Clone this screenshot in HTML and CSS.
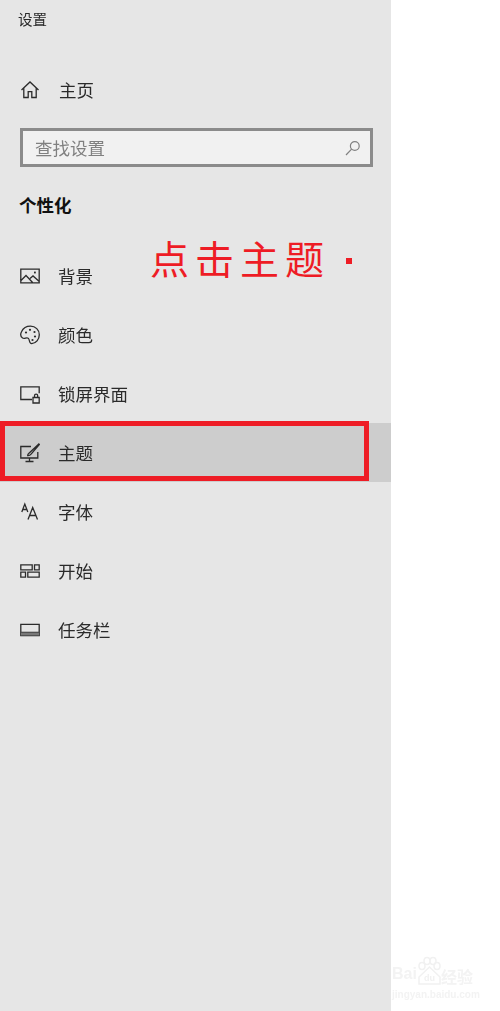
FILE: index.html
```html
<!DOCTYPE html>
<html lang="zh-CN">
<head>
<meta charset="utf-8">
<title>设置</title>
<link rel="stylesheet" href="styles.css">
</head>
<body>
<div class="page">
  <aside class="sidebar">
    <div class="title">设置</div>
    <div class="row home">
      <svg class="icon" viewBox="0 0 20 20"><path d="M1.500 10 10 2l8.500 8M3.800 8.200v9.300h4.400v-5.800h3.600v5.800h4.400V8.200"/></svg>
      <span>主页</span>
    </div>
    <div class="search">
      <span class="placeholder">查找设置</span>
      <svg class="search-icon" viewBox="0 0 16 16"><circle cx="9.800" cy="6" r="4.400"/><path d="M6.600 9.200 1 15"/></svg>
    </div>
    <h2 class="heading">个性化</h2>
    <nav class="nav">
      <div class="row">
        <svg class="icon" viewBox="0 0 20 20"><path d="M.8 3.200h18.400v13.600H.8zM1 14.500l5-5 6.600 7M10 12.500l3-2.600 6 5.400"/><rect class="fill" x="14" y="5.600" width="1.800" height="1.800"/></svg>
        <span>背景</span>
      </div>
      <div class="row">
        <svg class="icon" viewBox="0 0 20 20"><path d="M10.500 1.200c5 0 8.800 3.700 8.800 8.500s-3.400 8.900-7.600 8.900c-3 0-1.600-3.500-3.300-5.200-1.900-1.900-3.600 1-5.800-.4C.5 11.600.4 9 1.500 6.800 3.100 3.300 6.500 1.200 10.500 1.200z"/><circle class="fill" cx="6" cy="7.500" r="1.100"/><circle class="fill" cx="10" cy="4.800" r="1.100"/><circle class="fill" cx="14.500" cy="7" r="1.100"/><circle class="fill" cx="15" cy="11.500" r="1.100"/><circle class="fill" cx="12.500" cy="15" r="1.100"/></svg>
        <span>颜色</span>
      </div>
      <div class="row">
        <svg class="icon" viewBox="0 0 20 20"><path d="M12 15.500H.8V2.800h18.400v6.500M13 13.500h6.200v5.500H13zM14.500 13.500v-1.700c0-2.200 3.200-2.200 3.200 0v1.700"/></svg>
        <span>锁屏界面</span>
      </div>
      <div class="row active">
        <svg class="icon" viewBox="0 0 20 20"><path d="M11 3.500H.8v11.500h17V9M9.500 15v3M5.500 18.500h8"/><path d="M18.800 1 9.500 9.800c-.8.800-1.800 1-1.800 2.800 1.800.2 2.800-.8 3.600-1.800L19.300 1.500z"/></svg>
        <span>主题</span>
      </div>
      <div class="row">
        <svg class="icon" viewBox="0 0 20 20"><path d="M1.800 10 4.800 2l3 8M2.800 7.500h4M8 17.500 12.700 5.500l4.800 12M9.500 13.500h6.400"/></svg>
        <span>字体</span>
      </div>
      <div class="row">
        <svg class="icon" viewBox="0 0 20 20"><path d="M.8 3.800h11.400v5H.8zM14.500 3.800h4.700v5h-4.700zM.8 11.200h4.700v5H.8zM7.800 11.200h11.400v5H7.800z"/></svg>
        <span>开始</span>
      </div>
      <div class="row">
        <svg class="icon" viewBox="0 0 20 20"><path d="M.8 4.300h18.400v11.400H.8zM.8 12.300h18.400"/><rect class="fill soft" x="1" y="12.500" width="18" height="3"/></svg>
        <span>任务栏</span>
      </div>
    </nav>
  </aside>
  <main class="content"></main>
  <div class="highlight"></div>
  <div class="note">点击主题</div>
  <div class="dot"></div>
  <div class="mark">
    <div class="mark-top">
      <span class="mark-bai">Bai</span>
      <svg class="paw" viewBox="0 0 24 28"><ellipse cx="5" cy="9" rx="3" ry="3.500"/><ellipse cx="10" cy="4" rx="3" ry="3.500"/><ellipse cx="16" cy="4" rx="3" ry="3.500"/><ellipse cx="20" cy="9" rx="3" ry="3.500"/><path d="M12.500 10 2 20v7h21v-7z"/><text x="12.500" y="24" text-anchor="middle">du</text></svg>
      <span class="mark-cn">经验</span>
    </div>
    <div class="mark-url">jingyan.baidu.com</div>
  </div>
</div>
</body>
</html>
```
FILE: styles.css
```css
* {
  box-sizing: border-box;
}

html,
body {
  margin: 0;
  padding: 0;
  background: #fff;
}

body {
  font-family: "Noto Sans CJK SC", "Liberation Sans", sans-serif;
  color: #222;
}

.page {
  position: relative;
  display: flex;
  width: 500px;
  height: 1011px;
  overflow: hidden;
}

.sidebar {
  display: flex;
  flex-direction: column;
  width: 391px;
  height: 1011px;
  background: #e6e6e6;
}

.content {
  flex: 1;
  background: #fff;
}

.title {
  height: 40px;
  padding: 9px 0 0 18px;
  font-size: 14.500px;
  line-height: 20px;
  color: #2a2a2a;
  filter: blur(0.3px);
}

.row {
  display: flex;
  align-items: center;
  gap: 18px;
  height: 59px;
  padding-left: 20px;
  font-size: 17.500px;
  color: #2a2a2a;
}

.row span {
  filter: blur(0.35px);
}

.home {
  gap: 19px;
  height: 59px;
  margin-top: 20px;
}

.icon {
  flex: none;
  width: 20px;
  height: 20px;
  fill: none;
  stroke: #2b2b2b;
  stroke-width: 1.300;
  filter: blur(0.3px);
}

.icon .fill {
  fill: #2b2b2b;
  stroke: none;
}

.icon .soft {
  fill: #777;
}

.search {
  display: flex;
  align-items: center;
  justify-content: space-between;
  width: 353px;
  height: 39px;
  margin: 9px 0 0 20px;
  padding: 0 9px 0 12px;
  background: #f1f1f1;
  border: 3px solid #8b8b8b;
}

.placeholder {
  font-size: 17.500px;
  color: #808080;
  filter: blur(0.35px);
}

.search-icon {
  width: 16px;
  height: 16px;
  fill: none;
  stroke: #808080;
  stroke-width: 1.200;
}

.heading {
  height: 79px;
  margin: 0;
  padding: 25px 0 0 19px;
  font-size: 17.500px;
  line-height: 26px;
  font-weight: 700;
  color: #111;
}

.active {
  background: #cdcdcd;
}

.highlight {
  position: absolute;
  left: 0;
  top: 421px;
  width: 369px;
  height: 60px;
  border: 5px solid #ee1c25;
}

.note {
  position: absolute;
  left: 150px;
  top: 230px;
  font-size: 39px;
  line-height: 54px;
  letter-spacing: 6px;
  white-space: nowrap;
  color: #ee1c25;
}

.dot {
  position: absolute;
  left: 346px;
  top: 258px;
  width: 6px;
  height: 6px;
  background: #ee1c25;
}

.mark {
  position: absolute;
  left: 392px;
  top: 956px;
  width: 108px;
  color: #f3f3f3;
  filter: blur(0.6px);
}

.mark-top {
  display: flex;
  align-items: flex-end;
  height: 30px;
  font-family: "Liberation Sans", sans-serif;
  font-size: 16px;
  line-height: 24px;
  font-weight: 700;
}

.paw {
  flex: none;
  width: 24px;
  height: 30px;
  margin-left: 0;
  fill: none;
  stroke: #f1f1f1;
  stroke-width: 1.500;
}

.paw text {
  fill: #f1f1f1;
  stroke: none;
  font-family: "Liberation Sans", sans-serif;
  font-size: 9px;
  font-weight: 700;
}

.mark-cn {
  font-family: "Noto Sans CJK SC", sans-serif;
  font-size: 16px;
  line-height: 20px;
}

.mark-url {
  margin-top: 3px;
  font-family: "Liberation Sans", sans-serif;
  font-size: 10px;
  line-height: 12px;
  font-weight: 700;
  white-space: nowrap;
}
```
